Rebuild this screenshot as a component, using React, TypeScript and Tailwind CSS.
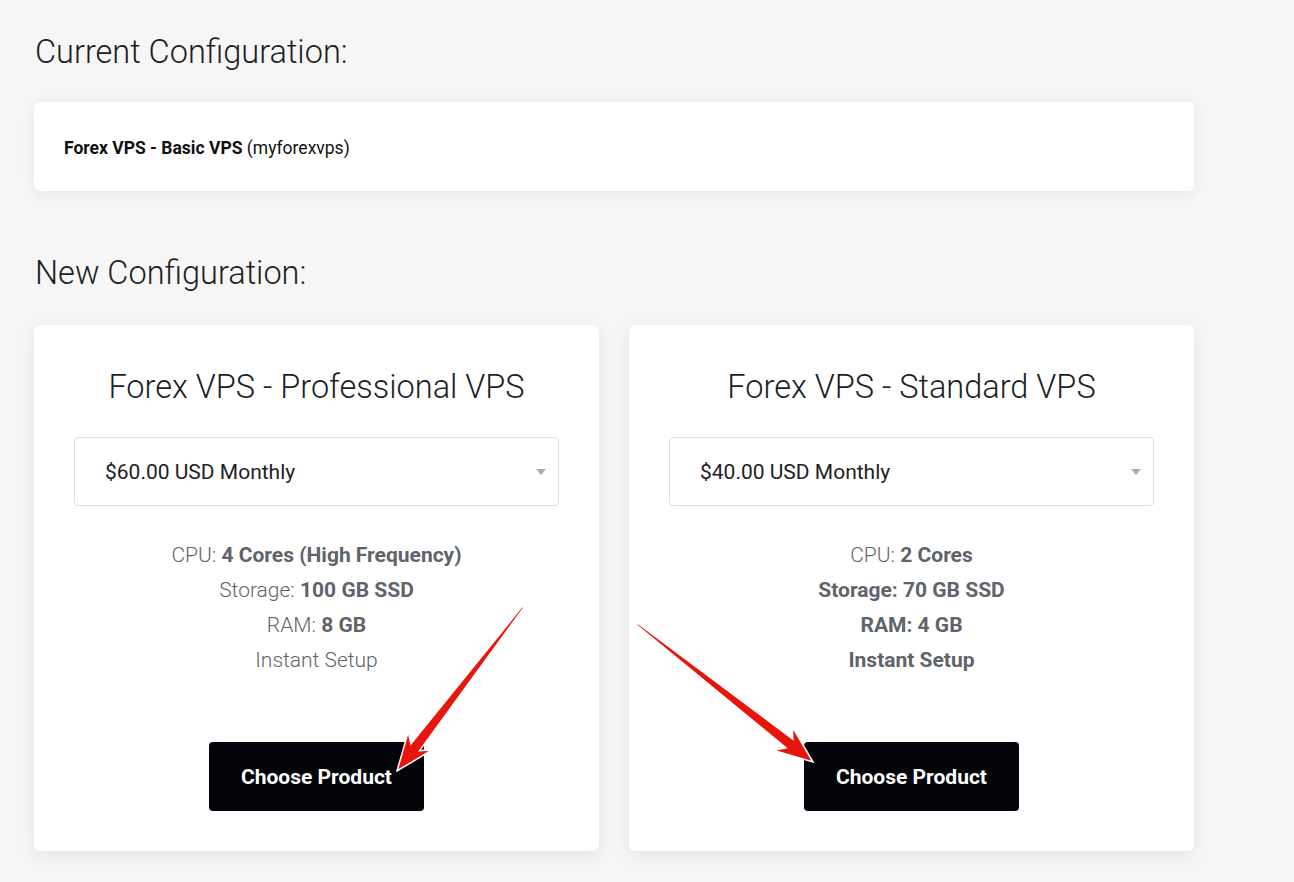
import React from 'react'

type Plan = {
  name: string
  price: string
  specs: { label: string; value: string; allBold?: boolean }[]
}

const plans: Plan[] = [
  {
    name: 'Forex VPS - Professional VPS',
    price: '$60.00 USD Monthly',
    specs: [
      { label: 'CPU:', value: '4 Cores (High Frequency)' },
      { label: 'Storage:', value: '100 GB SSD' },
      { label: 'RAM:', value: '8 GB' },
      { label: 'Instant Setup', value: '' },
    ],
  },
  {
    name: 'Forex VPS - Standard VPS',
    price: '$40.00 USD Monthly',
    specs: [
      { label: 'CPU:', value: '2 Cores' },
      { label: 'Storage:', value: '70 GB SSD', allBold: true },
      { label: 'RAM:', value: '4 GB', allBold: true },
      { label: 'Instant Setup', value: '', allBold: true },
    ],
  },
]

// red annotation arrow, tail -> tip
function Arrow({ x1, y1, x2, y2 }: { x1: number; y1: number; x2: number; y2: number }) {
  const L = Math.hypot(x2 - x1, y2 - y1)
  const angle = (Math.atan2(y2 - y1, x2 - x1) * 180) / Math.PI
  const pts = [
    [0, -1],
    [L - 30, -5.5],
    [L - 38, -15],
    [L, 0],
    [L - 38, 15],
    [L - 30, 5.5],
    [0, 1],
  ]
    .map((p) => p.join(','))
    .join(' ')
  return (
    <g transform={`translate(${x1} ${y1}) rotate(${angle})`}>
      <polygon points={pts} fill="#e8150c" stroke="#ffffff" strokeWidth="1.5" strokeLinejoin="miter" />
    </g>
  )
}

export default function App() {
  return (
    <div
      className="relative min-h-screen bg-[#f6f6f6] pl-[34px]"
      style={{ fontFamily: 'Roboto, "Liberation Sans", sans-serif' }}
    >
      <div className="w-[1160px] pt-[34px] pb-[30px]">
        <h2 className="text-[32.5px] leading-[36px] font-light text-[#1b1f24] pl-px">Current Configuration:</h2>

        <div className="mt-[32px] bg-white rounded-md shadow-[0_2px_14px_rgba(0,0,0,0.07)] px-[30px] pt-[34px] pb-[30px] text-[17.5px] leading-[25px] text-[#111]">
          <span className="font-bold">Forex VPS - Basic VPS</span> (myforexvps)
        </div>

        <h2 className="mt-[64px] text-[32.5px] leading-[36px] font-light text-[#1b1f24] pl-px">New Configuration:</h2>

        <div className="mt-[34px] grid grid-cols-2 gap-[30px]">
          {plans.map((plan) => (
            <div
              key={plan.name}
              className="bg-white rounded-md shadow-[0_4px_18px_rgba(0,0,0,0.08)] px-[40px] pt-[44px] pb-[40px] flex flex-col items-center"
            >
              <h3 className="text-[32.5px] leading-[36px] font-light text-[#1b1f24]">{plan.name}</h3>

              <div className="mt-[32px] w-full h-[69px] border border-[#dcdfe3] rounded-[4px] flex items-center justify-between pl-[30px] pr-[12px]">
                <span className="text-[21px] text-[#1e2125] pt-[2px]">{plan.price}</span>
                <svg width="10" height="6" viewBox="0 0 10 6">
                  <path d="M0 0 L10 0 L5 6 Z" fill="#a9adb3" />
                </svg>
              </div>

              <div className="mt-[32px] flex flex-col items-center text-[21px] leading-[35px] text-[#5f646a]">
                {plan.specs.map((s) => (
                  <div key={s.label}>
                    <span className={s.allBold ? 'font-bold' : 'font-light'}>{s.label}</span>
                    {s.value && <span className="font-bold"> {s.value}</span>}
                  </div>
                ))}
              </div>

              <button className="mt-[64px] w-[215px] h-[69px] rounded-[4px] bg-[#03050a] text-white text-[21px] font-bold pt-[2px]">
                Choose Product
              </button>
            </div>
          ))}
        </div>
      </div>

      <svg className="absolute left-0 top-0 pointer-events-none" width="1294" height="882">
        <Arrow x1={523} y1={607} x2={397} y2={771} />
        <Arrow x1={637} y1={624} x2={813} y2={762} />
      </svg>
    </div>
  )
}
